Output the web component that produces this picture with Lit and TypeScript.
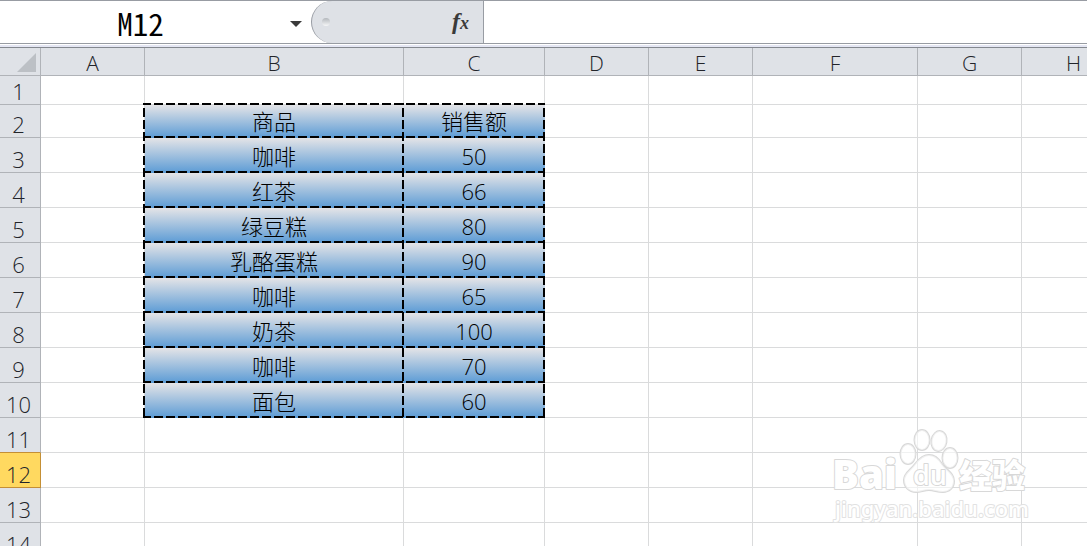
import { LitElement, html, svg, css } from "lit";
import { customElement, state } from "lit/decorators.js";
import { classMap } from "lit/directives/class-map.js";

const COLUMNS = ["A", "B", "C", "D", "E", "F", "G", "H"];
const ROWS = Array.from({ length: 14 }, (_, i) => i + 1);
const DATA: [string, string][] = [
  ["商品", "销售额"],
  ["咖啡", "50"],
  ["红茶", "66"],
  ["绿豆糕", "80"],
  ["乳酪蛋糕", "90"],
  ["咖啡", "65"],
  ["奶茶", "100"],
  ["咖啡", "70"],
  ["面包", "60"],
];

@customElement("formula-bar")
export class FormulaBar extends LitElement {
  static styles = css`
    :host {
      display: flex;
      height: 42px;
      background: #fff;
      border-top: 1px solid #989ca3;
      border-bottom: 1px solid #989ca3;
    }
    input {
      border: 0;
      outline: 0;
      padding: 0;
      min-width: 0;
      background: transparent;
      color: #000;
      font-family: "Noto Sans CJK SC", sans-serif;
    }
    button {
      border: 0;
      padding: 0;
      background: transparent;
    }
    .name-box {
      display: flex;
      width: 311px;
    }
    .name {
      flex: 1;
      font-size: 31px;
      font-weight: 400;
      font-feature-settings: "hwid";
      text-align: center;
    }
    .drop {
      width: 30px;
      display: flex;
      align-items: center;
      justify-content: center;
      padding-top: 3px;
    }
    .tools {
      display: flex;
      align-items: center;
      justify-content: space-between;
      box-sizing: border-box;
      width: 173px;
      padding: 0 14px 0 10px;
      background: #dee1e6;
      border-left: 1px solid #989ca3;
      border-right: 1px solid #989ca3;
      border-radius: 21px 0 0 21px;
    }
    .grip {
      width: 8px;
      height: 8px;
      border-radius: 50%;
      background: linear-gradient(#b3b7bc, #f6f7f8);
    }
    .fx {
      font: italic bold 24px/30px "Liberation Serif", serif;
      color: #3a3a3a;
    }
    .fx small {
      font-size: 18px;
    }
    .formula {
      flex: 1;
      font-size: 22px;
    }
  `;

  render() {
    return html`
      <div class="name-box">
        <input class="name" aria-label="Name box" value="M12" />
        <button class="drop" aria-label="Named cells">
          <svg width="12" height="6" viewBox="0 0 12 6"><path d="M0 0h12L6 6z" fill="#3a3a3a" /></svg>
        </button>
      </div>
      <div class="tools">
        <span class="grip"></span>
        <button class="fx" aria-label="Insert function">f<small>x</small></button>
      </div>
      <input class="formula" aria-label="Formula" />
    `;
  }
}

@customElement("baidu-mark")
export class BaiduMark extends LitElement {
  static styles = css`
    :host {
      display: block;
    }
    svg {
      display: block;
      overflow: visible;
    }
    .shape,
    .word {
      fill: #fff;
      stroke: #d8d8d8;
      stroke-width: 2px;
      paint-order: stroke;
      stroke-linejoin: round;
    }
    .shape {
      fill-opacity: 0.6;
    }
    .bai {
      font-family: "Open Sans", sans-serif;
      font-weight: 800;
      font-size: 40px;
    }
    .du {
      font-family: "Open Sans", sans-serif;
      font-size: 27px;
      font-weight: 600;
    }
    .cn {
      font-family: "Noto Sans CJK SC", sans-serif;
      font-size: 33px;
      font-weight: 900;
    }
    .site {
      font-family: "Noto Sans", sans-serif;
      font-size: 22px;
      font-weight: 500;
      stroke: #e2e2e2;
    }
  `;

  render() {
    return html`
      <svg width="200" height="100" viewBox="0 0 200 100" role="img" aria-label="Baidu">
        <text class="word bai" x="0" y="58">Bai</text>
        <ellipse class="shape" cx="76" cy="23" rx="7.5" ry="10" />
        <ellipse class="shape" cx="90" cy="9" rx="7.5" ry="10" />
        <ellipse class="shape" cx="107" cy="10" rx="7.5" ry="10" transform="rotate(10 107 10)" />
        <ellipse class="shape" cx="118" cy="27" rx="7.5" ry="10" />
        <path
          class="shape"
          d="M97 24C103 24 107 28 110 33C114 39 122 42 122 50C122 57 117 61 111 61C105 61 102 59 97 59C92 59 89 61 84 61C77 61 72 56 72 49C72 42 79 39 83 33C87 28 91 24 97 24Z"
        />
        <text class="word du" x="81" y="54">du</text>
        <text class="word cn" x="127" y="57">经验</text>
        <text class="word site" x="3" y="86">jingyan.baidu.com</text>
      </svg>
    `;
  }
}

@customElement("app-root")
export class AppRoot extends LitElement {
  @state() private activeRow = 12;

  static styles = css`
    :host {
      display: block;
      position: relative;
      height: 100vh;
      overflow: hidden;
      background: #fff;
      font-family: "Open Sans", "Noto Sans CJK SC", sans-serif;
      font-weight: 300;
      font-size: 22px;
      line-height: 26px;
    }
    .sheet {
      position: relative;
      margin-top: 1px;
      border-top: 2px solid #e4e6f3;
    }
    table {
      table-layout: fixed;
      width: 1126px;
      border-collapse: separate;
      border-spacing: 0;
      border-top: 1px solid #84888f;
    }
    th,
    td {
      box-sizing: border-box;
      padding: 0;
      font-weight: 300;
      text-align: center;
      vertical-align: bottom;
      border-right: 1px solid #dadbdc;
      border-bottom: 1px solid #dadbdc;
    }
    th {
      background: #dfe2e7;
      color: #22242a;
      border-color: #b0b3b8;
    }
    thead th {
      height: 28px;
      font-size: 21px;
      line-height: 24px;
    }
    tbody tr {
      height: 35px;
    }
    .r1 {
      height: 29px;
    }
    .r2 {
      height: 33px;
    }
    tbody th {
      padding-right: 3px;
      line-height: 26px;
    }
    td {
      padding-bottom: 3px;
    }
    .w-head { width: 41px; }
    .w-A, .w-D, .w-E, .w-G, .w-H { width: 104px; }
    .w-B { width: 259px; }
    .w-C { width: 141px; }
    .w-F { width: 165px; }
    thead .corner {
      padding: 0 4px 3px 0;
      line-height: 0;
      text-align: right;
    }
    .before-active {
      border-bottom-color: #c48f35;
    }
    .active {
      background: #ffd960;
      border-color: #c48f35;
    }
    .filled {
      color: #000;
      background: linear-gradient(#e4e4e7, #5b9bd5) border-box;
      border-color: transparent;
    }
    .dashes {
      position: absolute;
      left: 143px;
      top: 56px;
      fill: none;
      stroke: #000;
      stroke-width: 2px;
      stroke-dasharray: 9 3;
    }
    .mark {
      position: absolute;
      left: 832px;
      top: 431px;
    }
  `;

  private renderDashes() {
    const ys = [0, 33, 68, 103, 138, 173, 208, 243, 278, 313].map((y) => y + 1);
    const xs = [0, 259, 400].map((x) => x + 1);
    return html`
      <svg class="dashes" width="402" height="315" viewBox="0 0 402 315" aria-hidden="true">
        ${ys.map((y) => svg`<path d="M0 ${y}H402" stroke-dashoffset="1" />`)}
        ${xs.map((x) => svg`<path d="M${x} 0V315" stroke-dashoffset="7" />`)}
      </svg>
    `;
  }

  private renderCell(row: number, column: string) {
    const record = DATA[row - 2];
    const filled = !!record && (column === "B" || column === "C");
    return html`<td class=${classMap({ filled })}>${filled ? record[column === "B" ? 0 : 1] : ""}</td>`;
  }

  render() {
    return html`
      <formula-bar></formula-bar>
      <div class="sheet">
        <table>
          <thead>
            <tr>
              <th class="w-head corner">
                <svg width="19" height="19" viewBox="0 0 19 19"><path d="M19 0V19H0z" fill="#bcc0c5" /></svg>
              </th>
              ${COLUMNS.map((c) => html`<th class="w-${c}" scope="col">${c}</th>`)}
            </tr>
          </thead>
          <tbody>
            ${ROWS.map(
              (r) => html`
                <tr class="r${r}">
                  <th
                    scope="row"
                    class=${classMap({
                      active: r === this.activeRow,
                      "before-active": r === this.activeRow - 1,
                    })}
                  >${r}</th>
                  ${COLUMNS.map((c) => this.renderCell(r, c))}
                </tr>
              `
            )}
          </tbody>
        </table>
        ${this.renderDashes()}
      </div>
      <baidu-mark class="mark"></baidu-mark>
    `;
  }
}
